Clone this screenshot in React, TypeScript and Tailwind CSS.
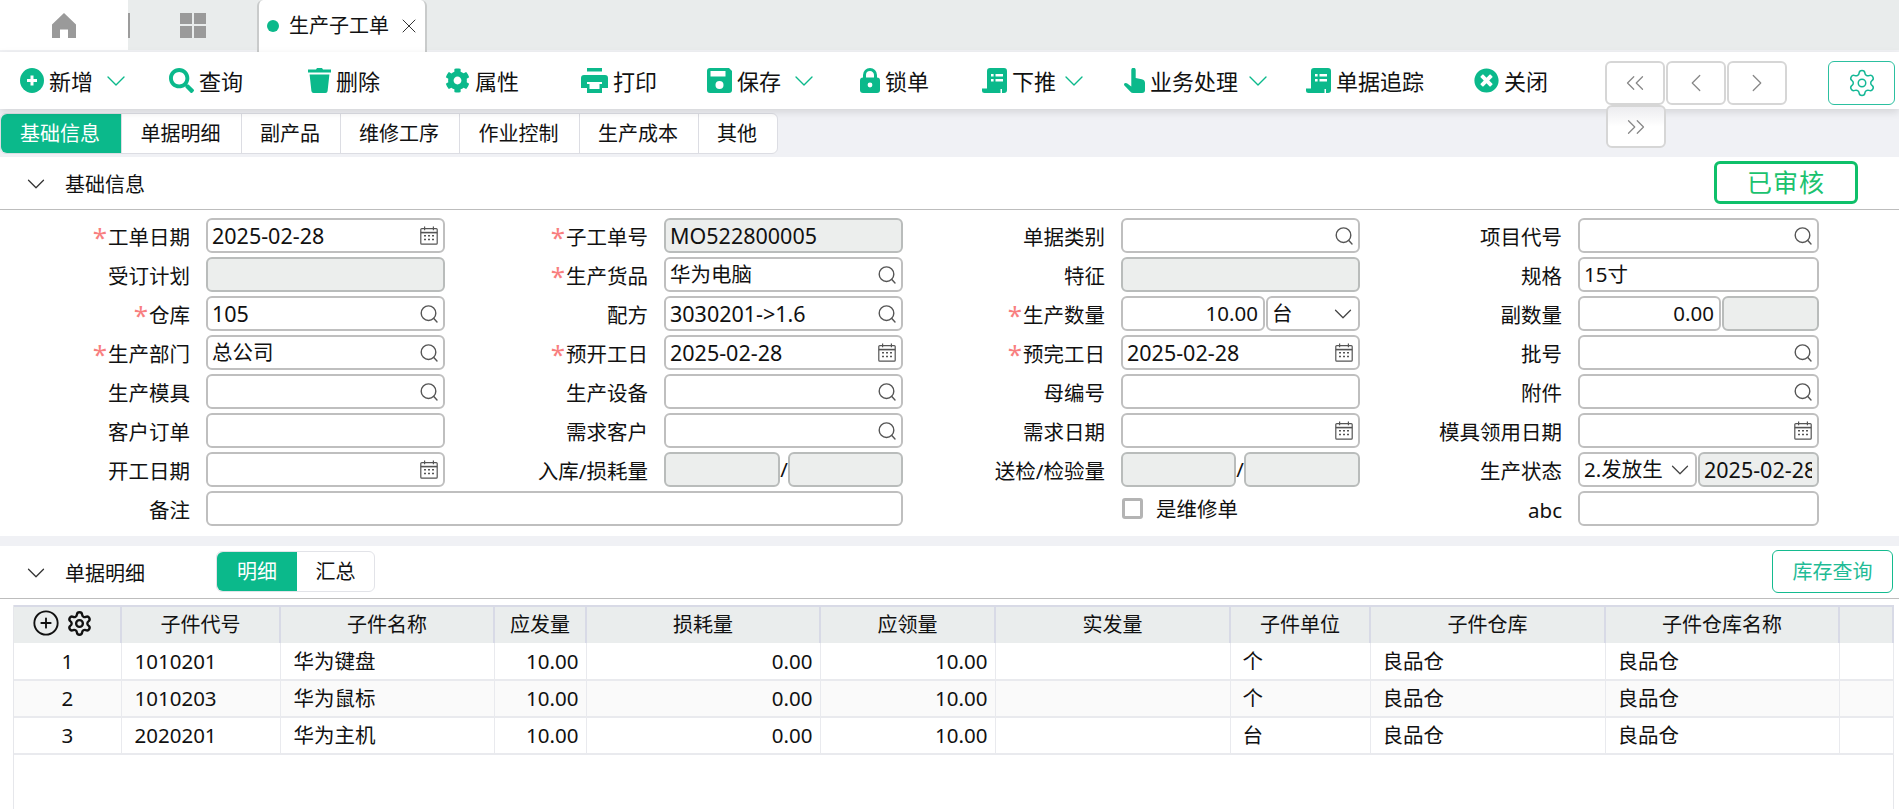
import { ChevronDown, ChevronLeft, ChevronRight, ChevronsLeft, ChevronsRight, CirclePlus, Settings, X } from "lucide-react";
import type { ReactNode } from "react";
import { FaCog, FaSearch, FaTimesCircle } from "react-icons/fa";

function ScrollIcon() {
  return (
    <svg viewBox="0 0 25 25" className="h-[25px] w-[25px]">
      <path
        fill="currentColor"
        d="M5 3a3 3 0 0 1 3-3h14a3 3 0 0 1 3 3v19a3 3 0 0 1-3 3h-2v-4H5z"
      />
      <path fill="currentColor" d="M0 20.5h18.5V25H2.5A2.5 2.5 0 0 1 0 22.5z" />
      <path
        fill="#fff"
        d="M9 6h2.6v2.6H9zM13.5 6H21v2.6h-7.5zM9 11h2.6v2.6H9zM13.5 11H21v2.6h-7.5z"
      />
    </svg>
  );
}

function PlusIcon() {
  return (
    <svg viewBox="0 0 24 25" className="h-[25px] w-[24px]">
      <ellipse cx="12" cy="12.5" rx="12" ry="12.5" fill="currentColor" />
      <path d="M12 7.5v10M7 12.5h10" stroke="#fff" strokeWidth="3" />
    </svg>
  );
}

function TrashIcon() {
  return (
    <svg viewBox="0 0 23 25" className="h-[25px] w-[23px]">
      <path
        fill="currentColor"
        d="M0 1.5h8L9 0h5l1 1.5h8V4.5H0zM1.6 6.5h19.8L19.6 23q-.2 2-2.2 2H5.6q-2 0-2.2-2z"
      />
    </svg>
  );
}

function PrintIcon() {
  return (
    <svg viewBox="0 0 27 25" className="h-[25px] w-[27px]">
      <path fill="currentColor" d="M6 0h15v3.6H6zM3 7h21q3 0 3 3v10h-6v-6H6v6H0V10q0-3 3-3z" />
      <path fill="currentColor" d="M6 16h15v9H6z" />
      <path fill="#fff" d="M8.5 15.5h10V21h-10z" />
    </svg>
  );
}

function SaveIcon() {
  return (
    <svg viewBox="0 0 25 25" className="h-[25px] w-[25px]">
      <path fill="currentColor" d="M3 0h19l3 3v19q0 3-3 3H3q-3 0-3-3V3q0-3 3-3z" />
      <path fill="#fff" d="M3.5 3h15v5.5h-15z" />
      <circle cx="12.5" cy="17" r="4" fill="#fff" />
    </svg>
  );
}

function LockIcon() {
  return (
    <svg viewBox="0 0 20 25" className="h-[25px] w-[20px]">
      <path fill="none" stroke="currentColor" strokeWidth="3" d="M4.5 11V7a5.5 5.5 0 0 1 11 0v4" />
      <rect y="9.5" width="20" height="15.5" rx="3" fill="currentColor" />
      <circle cx="10" cy="17" r="2.4" fill="#fff" />
    </svg>
  );
}

function HandIcon() {
  return (
    <svg viewBox="0 0 21 25" className="h-[25px] w-[21px]">
      <path
        fill="currentColor"
        d="M7.3 2a2.2 2.2 0 0 1 4.4 0v8l6 1.2q3.3.8 3.3 3.8v7q0 3-3 3H9.2q-1.8 0-3-1.6L.4 17.6q-.9-1.5.3-2.3 1.2-.8 2.6.1l4 3.1z"
      />
    </svg>
  );
}

const toolItems: { label: string; icon: ReactNode; width: string; chevron?: string }[] = [
  { label: "新增", icon: <PlusIcon />, width: "w-[149px]", chevron: "ml-[7px]" },
  { label: "查询", icon: <FaSearch className="h-[25px] w-[25px]" />, width: "w-[139px]" },
  { label: "删除", icon: <TrashIcon />, width: "w-[137px]" },
  { label: "属性", icon: <FaCog className="h-[25px] w-[25px]" />, width: "w-[136px]" },
  { label: "打印", icon: <PrintIcon />, width: "w-[126px]" },
  { label: "保存", icon: <SaveIcon />, width: "w-[153px]", chevron: "ml-[7px]" },
  { label: "锁单", icon: <LockIcon />, width: "w-[122px]" },
  { label: "下推", icon: <ScrollIcon />, width: "w-[142px]", chevron: "ml-[2px]" },
  { label: "业务处理", icon: <HandIcon />, width: "w-[182px]", chevron: "ml-[4px]" },
  { label: "单据追踪", icon: <ScrollIcon />, width: "w-[168px]" },
  { label: "关闭", icon: <FaTimesCircle className="h-[25px] w-[25px]" />, width: "w-[131px]" },
];

const sheetTabs = [
  { label: "基础信息", width: "w-[120px]" },
  { label: "单据明细", width: "w-[120px]" },
  { label: "副产品", width: "w-[99px]" },
  { label: "维修工序", width: "w-[119px]" },
  { label: "作业控制", width: "w-[120px]" },
  { label: "生产成本", width: "w-[119px]" },
  { label: "其他", width: "w-[79px]" },
];

function SearchGlyph() {
  return (
    <svg viewBox="0 0 18 18" fill="none" stroke="#555" strokeWidth="1.4" className="h-[18px] w-[18px] shrink-0">
      <circle cx="8.5" cy="8.2" r="7.3" />
      <path d="M13.8 13.6 17 17" strokeLinecap="round" />
    </svg>
  );
}

function CalendarGlyph() {
  return (
    <svg viewBox="0 0 18 19" fill="none" stroke="#555" strokeWidth="1.2" className="h-[19px] w-[18px] shrink-0">
      <rect x="0.8" y="2.6" width="16.4" height="15.6" rx="1" />
      <path d="M0.8 6.6h16.4" strokeWidth="1.6" />
      <path d="M4.6 0.6v3.6M13.4 0.6v3.6" />
      <path d="M4 9.8h2M8 9.8h2M12 9.8h2M4 13.4h2M8 13.4h2M12 13.4h2" strokeWidth="1.5" />
    </svg>
  );
}

function Field({
  value,
  kind,
  disabled,
  right,
  large,
  className,
}: {
  value?: string;
  kind?: "search" | "date" | "select";
  disabled?: boolean;
  right?: boolean;
  large?: boolean;
  className?: string;
}) {
  return (
    <div
      className={[
        "flex h-[35px] min-w-0 items-center gap-1 rounded-[6px] border-2 pl-[4px] pr-[5px]",
        disabled ? "border-[#b9bcbb] bg-[#eceeed]" : "border-[#bfbfbf] bg-white",
        className ?? "w-full",
      ].join(" ")}
    >
      <span
        className={[
          "min-w-0 flex-1 overflow-hidden whitespace-nowrap leading-[1.3]",
          right ? "text-right" : "",
          large ? "text-[21.5px]" : "",
        ].join(" ")}
      >
        {value}
      </span>
      {kind === "search" && <SearchGlyph />}
      {kind === "date" && <CalendarGlyph />}
      {kind === "select" && <ChevronDown className="-mx-[5px] h-[30px] w-[30px] shrink-0 text-[#444]" strokeWidth={1} />}
    </div>
  );
}

function Label({ text, required }: { text: string; required?: boolean }) {
  return (
    <div className="-mr-px flex h-[35px] items-center justify-end whitespace-nowrap pt-[4px]">
      {required && (
        <span className="relative top-[-1px] mr-[1px] text-[26px] leading-none text-[#f87f7f]">*</span>
      )}
      {text}
    </div>
  );
}

function Slash() {
  return <span className="w-[8px] shrink-0 text-center">/</span>;
}

const columns = [
  { title: "", width: "w-[107px]" },
  { title: "子件代号", width: "w-[159px]" },
  { title: "子件名称", width: "w-[214px]" },
  { title: "应发量", width: "w-[92px]" },
  { title: "损耗量", width: "w-[234px]" },
  { title: "应领量", width: "w-[175px]" },
  { title: "实发量", width: "w-[235px]" },
  { title: "子件单位", width: "w-[140px]" },
  { title: "子件仓库", width: "w-[235px]" },
  { title: "子件仓库名称", width: "w-[234px]" },
  { title: "", width: "w-[54px]" },
];

const rows = [
  { no: "1", code: "1010201", name: "华为键盘", unit: "个" },
  { no: "2", code: "1010203", name: "华为鼠标", unit: "个" },
  { no: "3", code: "2020201", name: "华为主机", unit: "台" },
];

export default function App() {
  const cell = "h-[37px] border-b-2 border-r border-b-[#e9eaee] border-r-[#e9eaee] p-0";
  return (
    <div className="flex h-[809px] flex-col overflow-hidden bg-white font-['Noto_Sans','Noto_Sans_CJK_SC',sans-serif] text-[20.5px] leading-none text-[#111]">
      {/* window tabs */}
      <div className="flex h-[52px] shrink-0 border-b-2 border-[#f1f2f5] bg-[#e9ecec]">
        <div className="flex h-[50px] w-[128px] items-center justify-center bg-white">
          <svg viewBox="0 0 24 25" className="h-[25px] w-[24px] fill-[#9a9a9a]">
            <path d="M12 0 24 11.5V25h-8v-8.5H8V25H0V11.5z" />
          </svg>
        </div>
        <div className="flex h-[50px] w-[129px] items-center">
          <div className="h-[25px] w-[2px] bg-[#9c9c9c]" />
          <div className="ml-[50px] grid h-[25px] w-[26px] shrink-0 grid-cols-2 gap-[2px]">
            <div className="bg-[#9a9a9a]" />
            <div className="bg-[#9a9a9a]" />
            <div className="bg-[#9a9a9a]" />
            <div className="bg-[#9a9a9a]" />
          </div>
        </div>
        <div className="flex h-[52px] w-[170px] items-center rounded-t-[6px] border-x-2 border-[#c9cbcb] bg-white pl-[8px]">
          <span className="h-[12px] w-[12px] rounded-full bg-[#0bb98b]" />
          <span className="ml-[10px] text-[20px]">生产子工单</span>
          <X className="ml-[8px] h-[24px] w-[24px] text-[#333]" strokeWidth={1} />
        </div>
      </div>

      {/* toolbar */}
      <div className="relative z-10 flex h-[57px] shrink-0 bg-white pl-[20px] pt-[16px] shadow-[0_3px_8px_rgba(0,0,0,0.12)]">
        {toolItems.map((item) => (
          <div key={item.label} className={`flex h-[25px] items-center ${item.width}`}>
            <span className="flex w-auto items-center text-[#0bb98b]">{item.icon}</span>
            <span className="ml-[5px] whitespace-nowrap text-[22px]">{item.label}</span>
            {item.chevron && <ChevronDown className={`${item.chevron} h-[32px] w-[32px] shrink-0 text-[#0bb98b]`} strokeWidth={1} />}
          </div>
        ))}
        <div className="-mt-[7px] flex h-[44px] w-[190px] flex-wrap content-start">
          <button className="flex h-[44px] w-[60px] items-center justify-center rounded-[6px] border-2 border-[#d6d6d6] bg-white text-[#888]">
            <ChevronsLeft className="h-[30px] w-[30px]" strokeWidth={1} />
          </button>
          <button className="ml-[1px] flex h-[44px] w-[60px] items-center justify-center rounded-[6px] border-2 border-[#d6d6d6] bg-white text-[#888]">
            <ChevronLeft className="h-[30px] w-[30px]" strokeWidth={1} />
          </button>
          <button className="ml-[1px] flex h-[44px] w-[60px] items-center justify-center rounded-[6px] border-2 border-[#d6d6d6] bg-white text-[#888]">
            <ChevronRight className="h-[30px] w-[30px]" strokeWidth={1} />
          </button>
          <button className="ml-[1px] flex h-[43px] w-[60px] items-center justify-center rounded-[6px] border-2 border-[#d6d6d6] bg-[linear-gradient(#ececef,#ffffff_50%)] text-[#888]">
            <ChevronsRight className="h-[30px] w-[30px]" strokeWidth={1} />
          </button>
        </div>
        <button className="-mt-[7px] ml-[33px] flex h-[44px] w-[67px] items-center justify-center rounded-[6px] border-[1.5px] border-[#2cc0a0] bg-white text-[#14b896]">
          <Settings className="h-[30px] w-[30px]" strokeWidth={1.2} />
        </button>
      </div>

      {/* sheet tabs */}
      <div className="h-[48px] shrink-0 bg-[#f0f1f5] pt-[4px]">
        <div className="flex h-[41px] w-fit rounded-[6px] border border-[#dcdde3] bg-white text-[20px]">
          {sheetTabs.map((tab, i) => (
            <div
              key={tab.label}
              className={[
                "flex h-full items-center justify-center pr-[2px]",
                tab.width,
                i === 0 ? "rounded-l-[6px] bg-[#0bb98b] text-white" : "border-l border-[#dcdde3]",
              ].join(" ")}
            >
              {tab.label}
            </div>
          ))}
        </div>
      </div>

      {/* basic info */}
      <div className="flex h-[53px] shrink-0 items-start border-b border-[#bdbdbd] pl-[21px] pr-[41px] pt-[4px]">
        <div className="flex h-[46px] items-center">
          <ChevronDown className="h-[30px] w-[30px] text-[#333]" strokeWidth={1} />
          <span className="ml-[14px] pt-[1px] text-[20px]">基础信息</span>
        </div>
        <div className="ml-auto flex h-[43px] w-[144px] items-center justify-center rounded-[6px] border-[3px] border-[#0fc06a] text-[25px] tracking-[1px] text-[#1bc26f]">
          已审核
        </div>
      </div>

      <div className="grid shrink-0 grid-cols-[189px_239px_185px_239px_184px_239px_184px_241px] gap-x-[17px] gap-y-[4px] pt-[8px]">
        <Label text="工单日期" required />
        <Field value="2025-02-28" kind="date" large />
        <Label text="子工单号" required />
        <Field value="MO522800005" disabled large />
        <Label text="单据类别" />
        <Field kind="search" />
        <Label text="项目代号" />
        <Field kind="search" />

        <Label text="受订计划" />
        <Field disabled />
        <Label text="生产货品" required />
        <Field value="华为电脑" kind="search" />
        <Label text="特征" />
        <Field disabled />
        <Label text="规格" />
        <Field value="15寸" />

        <Label text="仓库" required />
        <Field value="105" kind="search" large />
        <Label text="配方" />
        <Field value="3030201->1.6" kind="search" large />
        <Label text="生产数量" required />
        <div className="flex">
          <Field value="10.00" right className="w-[144px]" />
          <Field value="台" kind="select" className="ml-px w-[94px]" />
        </div>
        <Label text="副数量" />
        <div className="flex">
          <Field value="0.00" right className="w-[143px]" />
          <Field disabled className="ml-px w-[97px]" />
        </div>

        <Label text="生产部门" required />
        <Field value="总公司" kind="search" />
        <Label text="预开工日" required />
        <Field value="2025-02-28" kind="date" large />
        <Label text="预完工日" required />
        <Field value="2025-02-28" kind="date" large />
        <Label text="批号" />
        <Field kind="search" />

        <Label text="生产模具" />
        <Field kind="search" />
        <Label text="生产设备" />
        <Field kind="search" />
        <Label text="母编号" />
        <Field />
        <Label text="附件" />
        <Field kind="search" />

        <Label text="客户订单" />
        <Field />
        <Label text="需求客户" />
        <Field kind="search" />
        <Label text="需求日期" />
        <Field kind="date" />
        <Label text="模具领用日期" />
        <Field kind="date" />

        <Label text="开工日期" />
        <Field kind="date" />
        <Label text="入库/损耗量" />
        <div className="flex items-center">
          <Field disabled className="w-[116px]" />
          <Slash />
          <Field disabled className="w-[115px]" />
        </div>
        <Label text="送检/检验量" />
        <div className="flex items-center">
          <Field disabled className="w-[115px]" />
          <Slash />
          <Field disabled className="w-[116px]" />
        </div>
        <Label text="生产状态" />
        <div className="flex">
          <Field value="2.发放生" kind="select" className="w-[119px]" />
          <Field value="2025-02-28" disabled large className="ml-px w-[121px]" />
        </div>

        <Label text="备注" />
        <Field className="col-span-3 w-full" />
        <div />
        <div className="flex h-[35px] items-center pl-px">
          <span className="h-[21px] w-[21px] rounded-[3px] border-[3px] border-[#b4b4b4]" />
          <span className="ml-[13px] pt-[1px]">是维修单</span>
        </div>
        <Label text="abc" />
        <Field />
      </div>

      <div className="mt-[10px] h-[10px] shrink-0 bg-[#f0f1f5]" />

      {/* detail */}
      <div className="flex h-[53px] shrink-0 items-start border-b border-[#bdbdbd] pl-[21px] pr-[6px] pt-[4px]">
        <div className="flex h-[46px] items-center">
          <ChevronDown className="h-[30px] w-[30px] text-[#333]" strokeWidth={1} />
          <span className="ml-[14px] pt-[2px] text-[20px]">单据明细</span>
        </div>
        <div className="ml-[71px] mt-[1px] flex h-[41px] w-[159px] rounded-[6px] border border-[#e2e3e8] text-[20px]">
          <div className="flex w-[80px] items-center justify-center rounded-l-[6px] bg-[#0bb98b] text-white">明细</div>
          <div className="flex flex-1 items-center justify-center">汇总</div>
        </div>
        <button className="ml-auto flex h-[43px] w-[121px] items-center justify-center rounded-[6px] border-[1.5px] border-[#14bb8f] text-[20px] text-[#1fbc96]">
          库存查询
        </button>
      </div>

      <div className="ml-[13px] mt-[6px] w-[1881px] flex-1 border-x border-[#e6e7eb]">
        <table className="w-[1879px] table-fixed border-collapse">
          <colgroup>
            {columns.map((c, i) => (
              <col key={i} className={c.width} />
            ))}
          </colgroup>
          <thead>
            <tr className="h-[37px] bg-[#eaeded]">
              {columns.map((c, i) => (
                <th key={i} className="border-r-2 border-t-2 border-[#d8dae6] p-0 text-[20px] font-normal">
                  {i === 0 ? (
                    <div className="flex items-center justify-center gap-[6px] pb-[4px] pr-[9px]">
                      <CirclePlus className="h-[28px] w-[28px]" strokeWidth={1.6} />
                      <Settings className="h-[27px] w-[27px]" strokeWidth={2.1} />
                    </div>
                  ) : (
                    c.title
                  )}
                </th>
              ))}
            </tr>
          </thead>
          <tbody>
            {rows.map((r) => (
              <tr key={r.no} className={r.no === "2" ? "bg-[#fafafa]" : "bg-white"}>
                <td className={`${cell} text-center`}>{r.no}</td>
                <td className={`${cell} pl-[13px]`}>{r.code}</td>
                <td className={`${cell} pl-[13px]`}>{r.name}</td>
                <td className={`${cell} pr-[7px] text-right`}>10.00</td>
                <td className={`${cell} pr-[7px] text-right`}>0.00</td>
                <td className={`${cell} pr-[7px] text-right`}>10.00</td>
                <td className={cell} />
                <td className={`${cell} pl-[12px]`}>{r.unit}</td>
                <td className={`${cell} pl-[12px]`}>良品仓</td>
                <td className={`${cell} pl-[12px]`}>良品仓</td>
                <td className={cell} />
              </tr>
            ))}
          </tbody>
        </table>
      </div>
    </div>
  );
}
